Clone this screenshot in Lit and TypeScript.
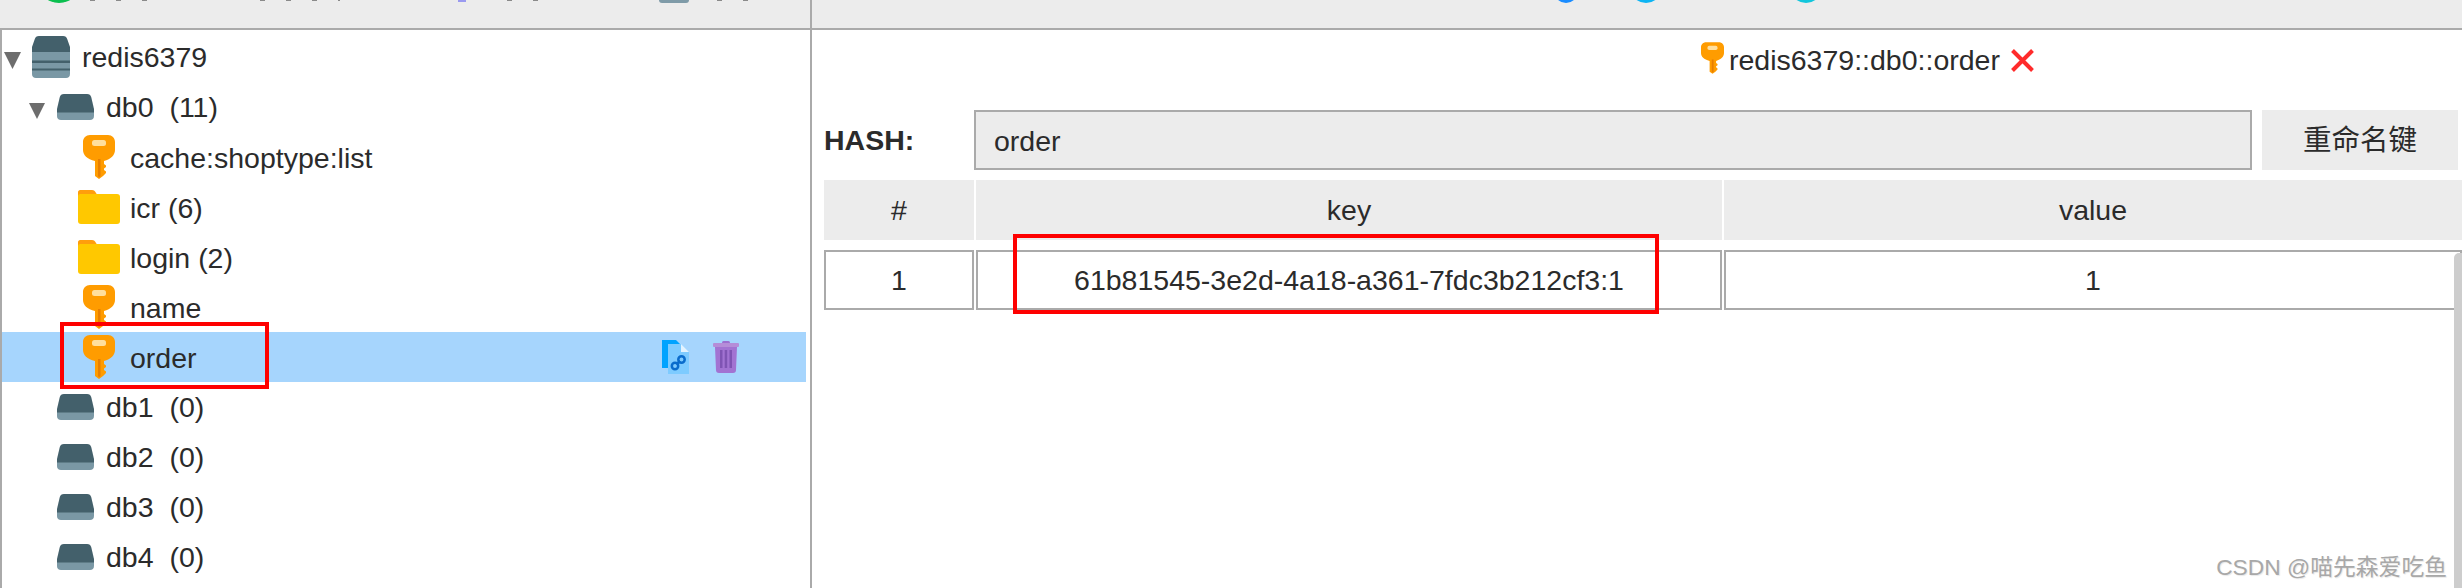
import { LitElement, html, css, svg } from "lit";
import { customElement } from "lit/decorators.js";

const keyIcon = (w = 32, h = 44) => html`<svg width=${w} height=${h} viewBox="0 0 32 44">
  <path fill="#ff9c00" d="M7 0H25C29 0 32 3 32 7V15C32 20 28 24 21 26V29L23 30.500V32L21 33.500V35L23 36.500V38L20 41L16 44L12 41V26C4 24 0 20 0 15V7C0 3 3 0 7 0Z"/>
  <rect x="9" y="5" width="14" height="6" rx="2.500" fill="#ffdf9e"/>
  <path fill="#e87f00" d="M15 24H17.500V41L16 42.500L15 41Z"/>
</svg>`;

const folderIcon = html`<svg width="42" height="34" viewBox="0 0 42 34">
  <path fill="#ff9e0c" d="M2 0H14C16 0 17 1 18 3L20 6H2C1 6 0 7 0 8V2C0 1 1 0 2 0Z"/>
  <path fill="#ffc800" d="M2 4H39C41 4 42 5 42 7V31C42 33 41 34 39 34H3C1 34 0 33 0 31V6C0 5 1 4 2 4Z"/>
</svg>`;

const dbIcon = html`<svg width="37" height="26" viewBox="0 0 37 26">
  <path fill="#7a98a5" d="M0 17H37V22C37 24.500 35.500 26 33 26H4C1.500 26 0 24.500 0 22Z"/>
  <path fill="#43606b" d="M7 0H30C32.500 0 33.500 1 34.200 3L37 15V18.500H0V15L2.800 3C3.500 1 4.500 0 7 0Z"/>
</svg>`;

const serverIcon = html`<svg width="38" height="42" viewBox="0 0 38 42">
  <path fill="#7a98a5" d="M0 16H38V38C38 40.500 36.500 42 34 42H4C1.500 42 0 40.500 0 38Z"/>
  <rect x="0" y="24.500" width="38" height="2.500" fill="#43606b"/>
  <rect x="0" y="32.500" width="38" height="2" fill="#43606b"/>
  <path fill="#43606b" d="M7 0H31C33.500 0 34.500 1 35.200 3L38 11V16H0V11L2.800 3C3.500 1 4.500 0 7 0Z"/>
</svg>`;

const arrow = (s: number) => html`<svg class="tri" width=${s} height=${s} viewBox="0 0 16 16"><path fill="#6d6d6d" d="M0 0H16L8 16Z"/></svg>`;

const copyIcon = html`<svg width="27" height="34" viewBox="0 0 27 34">
  <path fill="#00a3ff" d="M0 0H14L18 4V28H0Z"/>
  <path fill="#7ecbff" d="M6 4H19L27 12V34H6Z"/>
  <path fill="#e3f3ff" d="M19 4L27 12H19Z"/>
  ${svg`<g fill="none" stroke="#0a6ccc" stroke-width="2.500">
    <circle cx="13" cy="26" r="3.200"/><circle cx="19.500" cy="19.500" r="3.200"/>
    <path d="M14.500 24.500L18 21"/>
  </g>`}
</svg>`;

const trashIcon = html`<svg width="26" height="32" viewBox="0 0 26 32">
  <rect x="9" y="0" width="8" height="4" rx="1.500" fill="#9d6fd0"/>
  <rect x="0" y="2" width="26" height="4" rx="1" fill="#b58dd8"/>
  <path fill="#a273d2" d="M2 6H24L23 29C23 31 22 32 20 32H6C4 32 3 31 3 29Z"/>
  <rect x="7" y="9" width="2.500" height="18" fill="#7f54b3"/>
  <rect x="11.700" y="9" width="2.500" height="18" fill="#7f54b3"/>
  <rect x="16.500" y="9" width="2.500" height="18" fill="#7f54b3"/>
</svg>`;

@customElement("app-root")
export class AppRoot extends LitElement {
  static styles = css`
    :host {
      display: block;
      position: relative;
      width: 2462px;
      height: 588px;
      overflow: hidden;
      background: #fff;
      color: #2b2b2b;
      font: 28.5px "Liberation Sans", "Noto Sans CJK SC", sans-serif;
    }
    .toolbar {
      display: flex;
      height: 28px;
      overflow: hidden;
      background: #ececec;
      border-bottom: 2px solid #aaa;
    }
    .tool-left {
      display: flex;
      align-items: flex-start;
      width: 810px;
      border-right: 2px solid #aaa;
      box-sizing: content-box;
    }
    .tool-right {
      display: flex;
      align-items: flex-start;
    }
    .frag {
      height: 1px;
      background: repeating-linear-gradient(90deg, #8a8a8a 0 5px, transparent 5px 26px);
    }
    .green { width: 44px; height: 44px; margin: -41px 0 0 37px; border-radius: 50%; background: #0bbf4f; }
    .f1 { width: 78px; margin-left: 9px; }
    .f2 { width: 80px; margin-left: 92px; }
    .speck { width: 8px; height: 2px; margin-left: 118px; background: #9a9af0; }
    .f3 { width: 39px; margin-left: 41px; }
    .slate { width: 30px; height: 3px; margin-left: 113px; border-radius: 0 0 3px 3px; background: #7f9ba8; }
    .f4 { width: 42px; margin-left: 28px; }
    .d1 { width: 24px; height: 24px; margin: -21px 0 0 742px; border-radius: 50%; background: #1a8cff; }
    .d2 { width: 32px; height: 32px; margin: -29px 0 0 52px; border-radius: 50%; background: #0db4f3; }
    .d3 { width: 32px; height: 32px; margin: -29px 0 0 128px; border-radius: 50%; background: #12c6dc; }

    .main { display: flex; height: 558px; }
    .left {
      width: 804px;
      padding: 2px 4px 0 0;
      border-left: 2px solid #aaa;
      border-right: 2px solid #aaa;
    }
    .row {
      display: flex;
      align-items: center;
      height: 50px;
      line-height: 50px;
      white-space: pre;
    }
    .l0 { padding-left: 2px; }
    .l1 { padding-left: 27px; }
    .l2 { padding-left: 76px; }
    .arrow { display: flex; width: 28px; }
    .tri { margin-top: 7px; }
    .ico { display: flex; justify-content: center; width: 38px; margin-right: 12px; }
    .l1 .ico { width: 37px; }
    .l2 .ico { width: 42px; margin-right: 10px; }
    .l2 .txt { padding-top: 1px; }
    .selected { background: #a6d5fd; }
    .actions { display: flex; align-items: center; gap: 24px; margin-left: auto; padding-right: 67px; }

    .right { flex: 1; min-width: 0; padding-left: 12px; }
    .title {
      display: flex;
      align-items: center;
      height: 60px;
      margin-bottom: 20px;
      padding-left: 877px;
    }
    .title svg.k { margin-right: 5px; margin-top: -4px; }
    .title .x { margin-left: 11px; }
    .form { display: flex; gap: 10px; height: 60px; margin-right: 4px; }
    .hash { width: 140px; line-height: 60px; font-weight: 700; }
    .input {
      flex: 1;
      padding: 1px 0 0 18px;
      line-height: 56px;
      background: #ececec;
      border: 2px solid #aaa;
    }
    .btn { width: 196px; line-height: 60px; text-align: center; background: #ececec; }
    .table {
      display: grid;
      grid-template-columns: 150px 746px 1fr;
      gap: 10px 2px;
      margin-top: 10px;
    }
    .th, .td { height: 60px; line-height: 60px; text-align: center; box-sizing: border-box; }
    .th { background: #ececec; }
    .td { line-height: 56px; border: 2px solid #aaa; }
    .scroll {
      position: absolute;
      left: 2454px;
      top: 253px;
      bottom: 0;
      width: 8px;
      border-radius: 5px 0 0 0;
      background: #cdcdcd;
    }
    .box { position: absolute; border: 4px solid #fe0000; box-sizing: border-box; }
    .b1 { left: 60px; top: 322px; width: 209px; height: 67px; }
    .b2 { left: 1013px; top: 234px; width: 646px; height: 80px; }
    .mark {
      position: absolute;
      right: 15px;
      top: 553px;
      font-size: 22.8px;
      line-height: 28px;
      color: #a8a8a8;
      text-shadow: 1px 1px 1px #e8e8e8;
      white-space: pre;
    }
  `;

  private leaf(icon: unknown, label: string, extra = "") {
    return html`<div class="row l2 ${extra}"><span class="ico">${icon}</span><span class="txt">${label}</span>
      ${extra ? html`<span class="actions">${copyIcon}${trashIcon}</span>` : ""}</div>`;
  }

  private db(label: string) {
    return html`<div class="row l1"><span class="arrow"></span><span class="ico">${dbIcon}</span><span>${label}</span></div>`;
  }

  render() {
    return html`
      <div class="toolbar">
        <div class="tool-left">
          <span class="green"></span><span class="frag f1"></span><span class="frag f2"></span>
          <span class="speck"></span><span class="frag f3"></span><span class="slate"></span><span class="frag f4"></span>
        </div>
        <div class="tool-right"><span class="d1"></span><span class="d2"></span><span class="d3"></span></div>
      </div>
      <div class="main">
        <div class="left">
          <div class="row l0"><span class="arrow">${arrow(17)}</span><span class="ico">${serverIcon}</span><span>redis6379</span></div>
          <div class="row l1"><span class="arrow">${arrow(16)}</span><span class="ico">${dbIcon}</span><span>db0  (11)</span></div>
          ${this.leaf(keyIcon(), "cache:shoptype:list")}
          ${this.leaf(folderIcon, "icr (6)")}
          ${this.leaf(folderIcon, "login (2)")}
          ${this.leaf(keyIcon(), "name")}
          ${this.leaf(keyIcon(), "order", "selected")}
          ${this.db("db1  (0)")}
          ${this.db("db2  (0)")}
          ${this.db("db3  (0)")}
          ${this.db("db4  (0)")}
        </div>
        <div class="right">
          <div class="title">
            <svg class="k" width="23" height="32" viewBox="0 0 32 44">
              <path fill="#ff9c00" d="M7 0H25C29 0 32 3 32 7V15C32 20 28 24 21 26V29L23 30.500V32L21 33.500V35L23 36.500V38L20 41L16 44L12 41V26C4 24 0 20 0 15V7C0 3 3 0 7 0Z"/>
              <rect x="9" y="5" width="14" height="6" rx="2.500" fill="#ffdf9e"/>
              <path fill="#e87f00" d="M15 24H17.500V41L16 42.500L15 41Z"/>
            </svg>
            <span>redis6379::db0::order</span>
            <svg class="x" width="23" height="23" viewBox="0 0 23 23"><path d="M1.500 1.500L21.500 21.500M21.500 1.500L1.500 21.500" stroke="#ff2b2b" stroke-width="4" fill="none"/></svg>
          </div>
          <div class="form">
            <div class="hash">HASH:</div>
            <div class="input">order</div>
            <div class="btn">重命名键</div>
          </div>
          <div class="table">
            <div class="th">#</div><div class="th">key</div><div class="th">value</div>
            <div class="td">1</div><div class="td">61b81545-3e2d-4a18-a361-7fdc3b212cf3:1</div><div class="td">1</div>
          </div>
        </div>
      </div>
      <div class="scroll"></div>
      <div class="box b1"></div>
      <div class="box b2"></div>
      <div class="mark">CSDN @喵先森爱吃鱼</div>
    `;
  }
}
